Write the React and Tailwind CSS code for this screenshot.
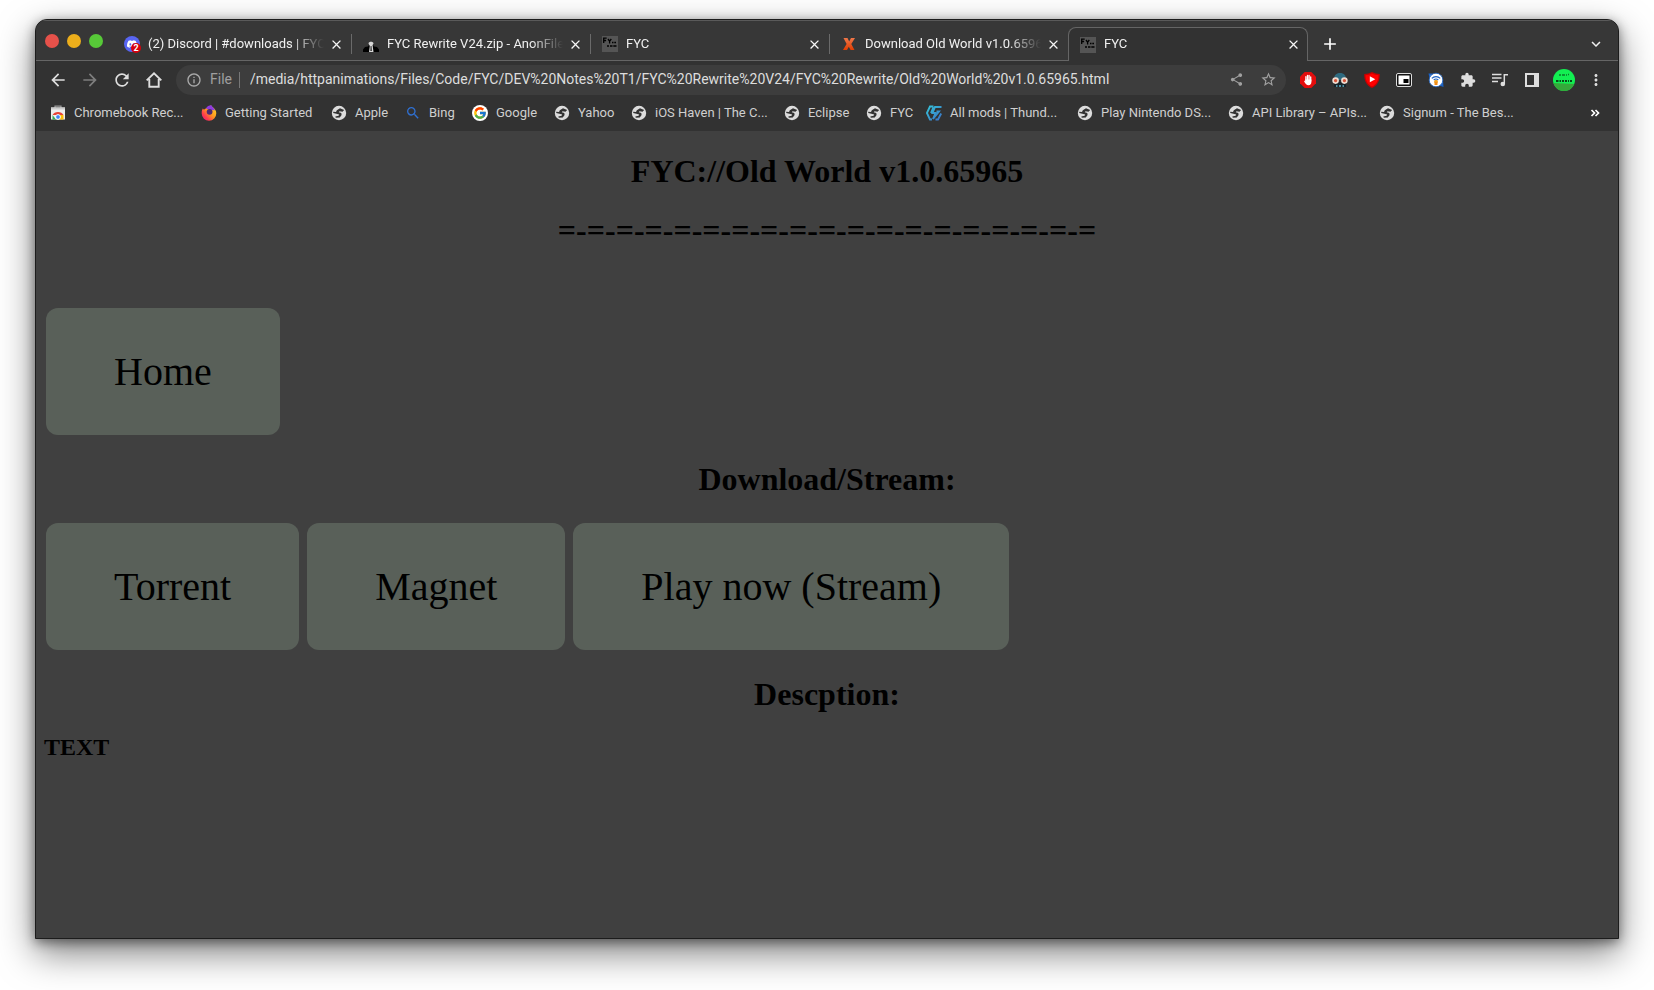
import React from "react";
import {
  MdAdd, MdArrowBack, MdArrowForward, MdClose, MdExtension, MdInfoOutline,
  MdKeyboardArrowDown, MdMoreVert, MdRefresh, MdSearch, MdShare, MdStarBorder,
} from "react-icons/md";
import { SiDiscord } from "react-icons/si";
import { FcGoogle } from "react-icons/fc";

const URL_TEXT =
  "/media/httpanimations/Files/Code/FYC/DEV%20Notes%20T1/FYC%20Rewrite%20V24/FYC%20Rewrite/Old%20World%20v1.0.65965.html";

function DiscordIcon() {
  return (
    <span className="relative flex size-4 items-center justify-center rounded-full bg-[#5865f2] text-white">
      <SiDiscord className="size-[10px]" />
      <span className="absolute -right-px -bottom-px flex size-[10px] items-center justify-center rounded-full bg-[#d8000c] text-[9px] leading-none font-bold">
        2
      </span>
    </span>
  );
}

function AnonIcon() {
  return (
    <svg viewBox="0 0 16 16" className="size-4">
      <path d="M0 16v-2.500l2-2.500 3-.5 1-1.500h4l1 1.500 3 .5 2 2.500V16z" fill="#000" />
      <path d="M5.500 7.500C5.500 5 10.500 5 10.500 7.500L9.600 9l.9 7H6l.8-6z" fill="#d8d8d8" />
      <path d="M7.600 10h.9l.3 5H7.4z" fill="#222" />
    </svg>
  );
}

function FycIcon() {
  return (
    <svg viewBox="0 0 16 16" className="size-4">
      <path d="M0 0h16v16H0z" fill="#555" />
      <path d="M1.700 7V2.200h3M1.700 4.500h2.400M6 3l1.600 2.200L9.300 3M7.600 5v2.500" fill="none" stroke="#000" strokeWidth="1.300" />
      <path d="M10 6.500h1.500M12.300 6.500H14M5 10h2M8 10h2.500M11.300 10h3.200" fill="none" stroke="#000" strokeWidth="1.600" />
    </svg>
  );
}

function XIcon() {
  return (
    <svg viewBox="0 0 16 16" className="size-4">
      <defs>
        <linearGradient id="x-fill" x1="0" y1="0" x2="0" y2="1">
          <stop offset="0" stopColor="#f0784a" />
          <stop offset="1" stopColor="#e03c00" />
        </linearGradient>
      </defs>
      <path d="M2.500 2h4l1.700 3.400L10 2h4l-3.700 6 3.200 6H9.600L7.800 10.700 6 14H2l3.600-6z" fill="url(#x-fill)" />
    </svg>
  );
}

function StoreIcon() {
  return (
    <svg viewBox="0 0 16 16" className="size-4">
      <path d="M5 3V1.200h6V3" fill="none" stroke="#999" strokeWidth="1.200" />
      <path d="M1 2.500h14V14.500H1z" fill="#eee" />
      <path d="M1 2.500h14v2H1z" fill="#ccc" />
      <path d="M2.500 10a6 5 0 0 1 11 0z" fill="#ea4335" />
      <path d="M2.500 10 6 14.500H2.500z" fill="#34a853" />
      <path d="M8 10h5.500v4.500H7z" fill="#fbbc05" />
      <circle cx="8" cy="12" r="2.400" fill="#4285f4" stroke="#fff" />
    </svg>
  );
}

function FirefoxIcon() {
  return (
    <svg viewBox="0 0 16 16" className="size-4">
      <defs>
        <linearGradient id="fox-fill" x1="1" y1="0" x2="0" y2="1">
          <stop offset="0" stopColor="#ffe226" />
          <stop offset=".45" stopColor="#ff9a1f" />
          <stop offset=".75" stopColor="#ff3750" />
          <stop offset="1" stopColor="#e31587" />
        </linearGradient>
      </defs>
      <path d="M1.800 3.500 3 4.700C4 3.500 5.500 3 7 3l3-2.700c.2 1.700 5.300 3 5.300 8A7.300 7.300 0 0 1 .7 8.500C.6 6 1.200 4.800 1.800 3.500z" fill="url(#fox-fill)" />
      <path d="M5 3.500C6 1 9 0 10.500.3c.5 2 2.500 2.500 3.500 5L9 5z" fill="#8f3be0" />
      <circle cx="8.600" cy="6.800" r="2.900" fill="#4f2a70" />
    </svg>
  );
}

function GlobeIcon() {
  return (
    <svg viewBox="0 0 16 16" className="size-4">
      <circle cx="8" cy="8" r="7.200" fill="#dcdcdc" />
      <path d="M9 3.200 13.200 5 11.500 6.800 8.500 6.200 7.800 7.200 10.300 8 10.600 10 8.800 12.600 4.800 12.800 4.300 11.600 7.600 10.800 8.200 9.600 5.400 8.800 2.200 8 2.300 6.800 5 7 5.800 5.200z" fill="#333" />
    </svg>
  );
}

function GoogleIcon() {
  return (
    <span className="flex size-4 items-center justify-center rounded-full bg-white">
      <FcGoogle className="size-[14px]" />
    </span>
  );
}

function BingIcon() {
  return <MdSearch className="size-4 text-[#2f6fd0]" />;
}

function ThunderIcon() {
  return (
    <svg viewBox="0 0 16 16" className="size-4">
      <defs>
        <linearGradient id="th-fill" x1="0" y1="0" x2="1" y2="1">
          <stop offset="0" stopColor="#35c4d8" />
          <stop offset="1" stopColor="#3a72c8" />
        </linearGradient>
      </defs>
      <path d="M7.500 1.500H4L.9 8 4 14.500h2M5 8l2.500-6M15.500 2H9L6.500 8h3L7 14l6-7.500h-2.500M9.500 14.500H12L15.200 8.500" fill="none" stroke="url(#th-fill)" strokeWidth="1.900" />
    </svg>
  );
}

const TABS = [
  { title: "(2) Discord | #downloads | FYC", Icon: DiscordIcon },
  { title: "FYC Rewrite V24.zip - AnonFiles", Icon: AnonIcon },
  { title: "FYC", Icon: FycIcon },
  { title: "Download Old World v1.0.65965", Icon: XIcon },
  { title: "FYC", Icon: FycIcon, active: true },
];

const BOOKMARKS = [
  { label: "Chromebook Rec...", Icon: StoreIcon, width: "w-[151px]" },
  { label: "Getting Started", Icon: FirefoxIcon, width: "w-[130px]" },
  { label: "Apple", Icon: GlobeIcon, width: "w-[74px]" },
  { label: "Bing", Icon: BingIcon, width: "w-[67px]" },
  { label: "Google", Icon: GoogleIcon, width: "w-[82px]" },
  { label: "Yahoo", Icon: GlobeIcon, width: "w-[77px]" },
  { label: "iOS Haven | The C...", Icon: GlobeIcon, width: "w-[153px]" },
  { label: "Eclipse", Icon: GlobeIcon, width: "w-[82px]" },
  { label: "FYC", Icon: GlobeIcon, width: "w-[60px]" },
  { label: "All mods | Thund...", Icon: ThunderIcon, width: "w-[151px]" },
  { label: "Play Nintendo DS...", Icon: GlobeIcon, width: "w-[151px]" },
  { label: "API Library – APIs...", Icon: GlobeIcon, width: "w-[151px]" },
  { label: "Signum - The Bes...", Icon: GlobeIcon, width: "w-[151px]" },
];

function Tab({ title, Icon, active, divider }) {
  const shape = active
    ? "z-10 -ml-px w-[240px] rounded-t-lg border border-b-0 border-[#656565] bg-[#323232] pr-[6px] pl-[11px]"
    : "w-[239px] pr-2 pl-[11px]";
  return (
    <div className={`relative mt-[7px] flex h-[34px] min-w-0 items-center ${shape}`}>
      <button type="button" role="tab" aria-selected={!!active} className="flex min-w-0 flex-1 items-center gap-2 text-left">
        <span className="size-4 shrink-0"><Icon /></span>
        <span className="min-w-0 flex-1 overflow-hidden pb-px text-[13px] leading-4 whitespace-nowrap text-[#f0f0f0] [mask-image:linear-gradient(to_right,#000_calc(100%-32px),transparent)]">
          {title}
        </span>
      </button>
      <button type="button" aria-label={`Close ${title}`} className="ml-1 flex size-4 shrink-0 items-center justify-center text-[#f5f5f5]">
        <MdClose className="size-[15px]" />
      </button>
      {divider && <span className="absolute top-[7px] right-0 h-5 w-px bg-[#6a6a6a]" />}
    </div>
  );
}

function ToolButton({ label, children, dim }) {
  return (
    <button type="button" aria-label={label} className={`flex size-8 shrink-0 items-center justify-center ${dim ? "text-[#7d7d7d]" : "text-[#dedede]"}`}>
      {children}
    </button>
  );
}

function HomeIcon() {
  return (
    <svg viewBox="0 0 16 16" className="size-4" fill="none" stroke="currentColor" strokeWidth="1.900">
      <path d="M.7 8.400 8 1.300l7.300 7.100M3.300 7v7.800h9.400V7" />
    </svg>
  );
}

function AdblockIcon() {
  return (
    <svg viewBox="0 0 16 16" className="size-4">
      <path d="M4.700 0h6.600L16 4.700v6.600L11.300 16H4.700L0 11.300V4.700z" fill="#e30d0d" />
      <path d="M5.900 9V4.700M7.500 8V3.300M9.100 8V3.500M10.700 9V5" stroke="#fff" strokeWidth="1.300" strokeLinecap="round" />
      <path d="M5.200 7.500h6.200v2.500c0 2-1 3.200-2.800 3.200-2.200 0-3.500-1.800-4.600-4.200.6-.5 1-.2 1.400.5z" fill="#fff" />
    </svg>
  );
}

function SpyIcon() {
  return (
    <svg viewBox="0 0 16 16" className="size-4">
      <path d="M2 8C2 3 4 1 8 1s6 2 6 7z" fill="#2f6b80" />
      <path d="M2 10h12v5H2z" fill="#17242b" />
      <path d="M4 13h1.500v2H4zM7 13h2v2H7zM10.500 13H12v2h-1.500z" fill="#4f91a5" />
      <circle cx="3.600" cy="8.600" r="2.500" fill="#d9553a" stroke="#f0dcd0" strokeWidth="1.600" />
      <circle cx="12.400" cy="8.600" r="2.500" fill="#d9553a" stroke="#f0dcd0" strokeWidth="1.600" />
    </svg>
  );
}

function ShieldPlayIcon() {
  return (
    <svg viewBox="0 0 16 16" className="size-4">
      <path d="M8 0c2.500 1.300 5 1.800 7.800 2C16 8.500 13.500 13.500 8 16 2.500 13.500 0 8.500.2 2 3 1.800 5.500 1.300 8 0z" fill="#c60000" />
      <path d="M8 1.500c2 1 4.300 1.500 6.500 1.700C14.400 8.500 12.500 12.300 8 14.500 3.500 12.300 1.600 8.500 1.500 3.200 3.700 3 6 2.500 8 1.500z" fill="#f00" />
      <path d="M5.800 4.300 11.300 7.300 5.800 10.300z" fill="#fff" />
    </svg>
  );
}

function PipIcon() {
  return (
    <svg viewBox="0 0 16 16" className="size-4">
      <rect x=".5" y="1.500" width="15" height="13" rx="1.500" fill="#111" stroke="#ddd" />
      <path d="M2.500 3.500h11v9h-11z" fill="#fff" />
      <path d="M7.500 7h5v4h-5z" fill="#000" />
    </svg>
  );
}

function BeaconIcon() {
  return (
    <svg viewBox="0 0 16 16" className="size-4">
      <path d="M.5 1.500 5 1.500 1.500 6zM15.500 15l-.5-7-4 5.500z" fill="#1c62c4" />
      <circle cx="8" cy="8" r="6.800" fill="#fff" stroke="#1c62c4" strokeWidth=".800" />
      <path d="M3.800 6.300C6 4 10 4 12.200 6.300M5.700 8C7 6.900 9 6.900 10.300 8" fill="none" stroke="#1c62c4" strokeWidth="1.100" />
      <circle cx="8" cy="9.600" r="1.900" fill="#f5a623" />
      <path d="M6.500 10h3v3h-3z" fill="#f08c1a" />
    </svg>
  );
}

function QueueIcon() {
  return (
    <svg viewBox="0 0 16 16" className="size-4" fill="none" stroke="currentColor" strokeWidth="1.500">
      <path d="M0 2.500h9.500M0 6h9.500M0 9.500h6M12.300 12V2.700h3.700" />
      <circle cx="10.800" cy="12" r="2.300" fill="currentColor" stroke="none" />
    </svg>
  );
}

function SidePanelIcon() {
  return (
    <svg viewBox="0 0 14 14" className="size-[14px]">
      <path d="M0 0h14v14H0zM2 2v10h7V2z" fill="currentColor" fillRule="evenodd" />
    </svg>
  );
}

function Avatar() {
  return (
    <svg viewBox="0 0 22 22" className="size-[22px]">
      <defs>
        <clipPath id="avatar-clip"><circle cx="11" cy="11" r="11" /></clipPath>
      </defs>
      <g clipPath="url(#avatar-clip)">
        <path d="M0 0h22v22H0z" fill="#12ef52" />
        <path d="M0 14 22 15v8H0z" fill="#35a83a" />
        <path d="M6 6h2M9 6h3M13 6h1M15 5.500h1" stroke="#0a7a2a" strokeWidth="1.500" />
        <path d="M3 12h2.500M6.500 12h1.500M9 12h2M12 12h2M15 12h1M17 12h2" stroke="#064a18" strokeWidth="2" />
      </g>
    </svg>
  );
}

function PageButton({ children }) {
  return (
    <button type="button" className="rounded-xl bg-[#596059] px-[68px] py-10 text-[40px] leading-[47px] text-black">
      {children}
    </button>
  );
}

function PageHeading({ children }) {
  return <h1 className="text-center text-[32px] leading-[37px] font-bold">{children}</h1>;
}

export default function App() {
  return (
    <div className="flex min-h-screen flex-col bg-white px-[35px] pt-[19px] pb-[51px] font-[Roboto,'Noto_Sans',sans-serif]">
      <div className="flex flex-1 flex-col overflow-hidden rounded-t-xl border border-[#1c1c1c] bg-[#404040] shadow-[0_14px_36px_rgba(0,0,0,0.5),0_3px_12px_rgba(0,0,0,0.45)]">
        <div className="flex h-[41px] items-start border-t border-[#5a5a5a] bg-[#373737] shadow-[inset_0_-1px_0_#656565]">
          <div className="flex w-[77px] shrink-0 items-center gap-2 pt-[13px] pl-[9px]">
            <button type="button" aria-label="Close window" className="size-[14px] rounded-full bg-[#e6514a]" />
            <button type="button" aria-label="Minimize window" className="size-[14px] rounded-full bg-[#ecae1b]" />
            <button type="button" aria-label="Maximize window" className="size-[14px] rounded-full bg-[#57c938]" />
          </div>
          <div role="tablist" className="-mt-px flex min-w-0">
            {TABS.map((tab, i) => (
              <Tab key={i} {...tab} divider={i < 3} />
            ))}
          </div>
          <button type="button" aria-label="New tab" className="mt-[13px] ml-3 shrink-0 text-white">
            <MdAdd className="size-5" />
          </button>
          <button type="button" aria-label="Search tabs" className="mt-[14px] mr-[13px] ml-auto shrink-0 text-[#f0f0f0]">
            <MdKeyboardArrowDown className="size-[18px]" />
          </button>
        </div>

        <div className="flex h-[37px] items-center bg-[#323232] pr-[6px] pl-[6px]">
          <ToolButton label="Back"><MdArrowBack className="size-5" /></ToolButton>
          <ToolButton label="Forward" dim><MdArrowForward className="size-5" /></ToolButton>
          <ToolButton label="Reload"><MdRefresh className="size-5" /></ToolButton>
          <ToolButton label="Home"><HomeIcon /></ToolButton>
          <div className="ml-[6px] flex h-[30px] min-w-0 flex-1 items-center rounded-full bg-[#3d3d3d] pr-[2px] pl-[10px] text-[14px]">
            <MdInfoOutline className="size-4 shrink-0 text-[#aaaaaa]" />
            <span className="ml-2 w-[21px] text-[#9f9f9f]">File</span>
            <span className="mr-[10px] ml-2 h-4 w-px bg-[#777777]" />
            <input aria-label="Address" defaultValue={URL_TEXT} className="min-w-0 flex-1 bg-transparent text-[#dddddd] outline-none" />
            <button type="button" aria-label="Share" className="flex size-8 items-center justify-center text-[#a0a0a0]"><MdShare className="size-[15px]" /></button>
            <button type="button" aria-label="Bookmark" className="flex size-8 items-center justify-center text-[#a0a0a0]"><MdStarBorder className="size-[17px]" /></button>
          </div>
          <div className="ml-[6px] flex items-center">
            <ToolButton label="Ad blocker"><AdblockIcon /></ToolButton>
            <ToolButton label="Privacy"><SpyIcon /></ToolButton>
            <ToolButton label="Video blocker"><ShieldPlayIcon /></ToolButton>
            <ToolButton label="Picture in picture"><PipIcon /></ToolButton>
            <ToolButton label="Beacon"><BeaconIcon /></ToolButton>
            <ToolButton label="Extensions"><MdExtension className="size-4" /></ToolButton>
            <ToolButton label="Media"><QueueIcon /></ToolButton>
            <ToolButton label="Side panel"><SidePanelIcon /></ToolButton>
            <ToolButton label="Profile"><Avatar /></ToolButton>
            <ToolButton label="Menu"><MdMoreVert className="size-[18px]" /></ToolButton>
          </div>
        </div>

        <nav aria-label="Bookmarks" className="flex h-[33px] items-center bg-[#323232] pr-[18px] pb-[3px] pl-[14px] text-[13px] text-[#cfcfcf]">
          {BOOKMARKS.map(({ label, Icon, width }, i) => (
            <a key={i} href="#" className={`flex shrink-0 items-center gap-2 whitespace-nowrap ${width}`}>
              <Icon />
              {label}
            </a>
          ))}
          <button type="button" aria-label="More bookmarks" className="ml-auto text-white">
            <svg viewBox="0 0 10 10" className="size-[10px]" fill="none" stroke="currentColor" strokeWidth="1.700">
              <path d="M1.500 2 4.500 5 1.500 8M5.500 2 8.500 5l-3 3" />
            </svg>
          </button>
        </nav>

        <main className="flex-1 px-2 pt-[22px] font-['Liberation_Serif',serif] text-black">
          <PageHeading>FYC://Old World v1.0.65965</PageHeading>
          <div className="mt-[22px]">
            <PageHeading>=-=-=-=-=-=-=-=-=-=-=-=-=-=-=-=-=-=-=</PageHeading>
          </div>
          <div className="mt-[59px] flex px-[2px]">
            <PageButton>Home</PageButton>
          </div>
          <div className="mt-[26px]">
            <PageHeading>Download/Stream:</PageHeading>
          </div>
          <div className="mt-[25px] flex flex-wrap gap-2 px-[2px]">
            <PageButton>Torrent</PageButton>
            <PageButton>Magnet</PageButton>
            <PageButton>Play now (Stream)</PageButton>
          </div>
          <div className="mt-[26px]">
            <PageHeading>Descption:</PageHeading>
          </div>
          <h2 className="mt-5 text-2xl leading-7 font-bold">TEXT</h2>
        </main>
      </div>
    </div>
  );
}
